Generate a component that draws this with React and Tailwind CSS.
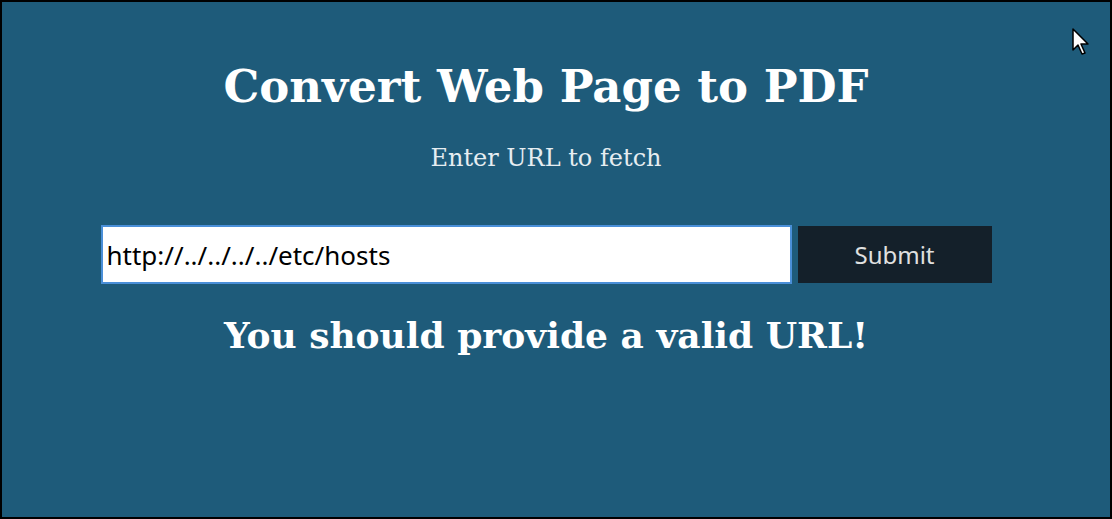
import React from 'react';

const Cursor = () => (
  <svg className="absolute left-[1071px] top-[28px]" width="22" height="30" viewBox="0 0 22 30">
    <path d="M2 1 L2 22 L7 17 L11 26 L14 25 L10 16 L17 16 Z" fill="#ffffff" stroke="#000000" strokeWidth="1.5" strokeLinejoin="round" />
  </svg>
);

export default function App() {
  return (
    <div className="relative w-[1112px] h-[519px] bg-black p-[2px]">
      <div className="w-full h-full bg-[#1e5b7a] flex flex-col items-center pt-[57px] pr-[20px]">
        <h1 className="text-[45px] leading-[56px] font-bold text-white font-['DejaVu_Serif',serif]">
          Convert Web Page to PDF
        </h1>
        <p className="mt-[28px] text-[24px] leading-[30px] text-[#e6edf1] font-['DejaVu_Serif',serif]">
          Enter URL to fetch
        </p>
        <form className="mt-[52px] flex items-center gap-[6px]" onSubmit={e => e.preventDefault()}>
          <input
            type="text"
            defaultValue="http://../../../../etc/hosts"
            className="w-[691px] h-[59px] bg-white border-2 border-[#4a8fd8] px-[4px] text-[26px] text-black outline-none font-['Noto_Sans',sans-serif]"
          />
          <button
            type="submit"
            className="w-[194px] h-[57px] bg-[#14202a] text-[#e0e0e0] text-[24px] font-['Noto_Sans',sans-serif]"
          >
            Submit
          </button>
        </form>
        <h2 className="mt-[26px] text-[36px] leading-[50px] font-bold text-white font-['DejaVu_Serif',serif]">
          You should provide a valid URL!
        </h2>
      </div>
      <Cursor />
    </div>
  );
}
